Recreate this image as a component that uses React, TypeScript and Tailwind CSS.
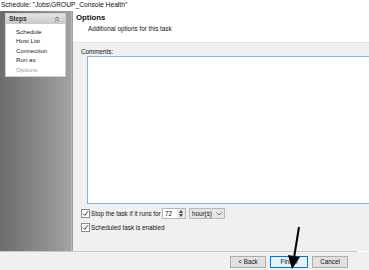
import React from "react";

const font = { fontFamily: '"Liberation Sans", Arial, sans-serif' };

const Check: React.FC = () => (
  <span className="w-[9px] h-[9px] border border-[#8a8a8a] bg-white flex items-center justify-center shrink-0">
    <svg width="7" height="7" viewBox="0 0 7 7">
      <path d="M1 3.6 L2.8 5.4 L6 1.2" fill="none" stroke="#3a3a3a" strokeWidth="1" />
    </svg>
  </span>
);

const Button: React.FC<{ label: string; focused?: boolean }> = ({ label, focused }) => (
  <button
    className={
      focused
        ? "w-[38px] h-[12px] bg-[#e5f1fb] border border-[#0078d7] text-[6.3px] leading-[10px] text-[#111]"
        : "w-[36px] h-[12px] bg-[#e1e1e1] border border-[#adadad] text-[6.3px] leading-[10px] text-[#111]"
    }
  >
    {label}
  </button>
);

const steps = ["Schedule", "Host List", "Connection", "Run as", "Options"];

export default function App() {
  return (
    <div className="w-[369px] h-[270px] bg-white flex flex-col relative overflow-hidden text-[#111]" style={font}>
      <div className="h-[11px] pl-[1px] text-[6.7px] leading-[10px] whitespace-nowrap">
        Schedule: "Jobs\GROUP_Console Health"
      </div>

      <div className="h-[240px] flex">
        <aside className="w-[71px] bg-gradient-to-r from-[#6c6c6c] to-[#a2a2a2] pt-[2px] px-[5px]">
          <div className="bg-white border border-[#d0d0d0]">
            <div className="h-[10px] bg-gradient-to-b from-[#e4e4e4] to-[#c8c8c8] flex items-center justify-between pl-[3px] pr-[5px]">
              <span className="text-[6.5px] font-bold text-[#333]">Steps</span>
              <svg width="6" height="6" viewBox="0 0 6 6">
                <path d="M1 3 L3 1 L5 3 M1 5.5 L3 3.5 L5 5.5" fill="none" stroke="#555" strokeWidth="0.8" />
              </svg>
            </div>
            <ul className="pt-[3px] pb-[2px] pl-[10px]">
              {steps.map((s, i) => (
                <li
                  key={s}
                  className={
                    i === 4
                      ? "text-[6.2px] leading-[9.4px] text-[#9a9a9a]"
                      : "text-[6.2px] leading-[9.4px] text-[#1a1a1a]"
                  }
                >
                  {s}
                </li>
              ))}
            </ul>
          </div>
        </aside>
        <div className="w-[2px] bg-[#b8b8b8] border-r border-[#a0a0a0]" />

        <main className="flex-1 flex flex-col">
          <header className="h-[32px] bg-white pl-[3px] pt-[1px] border-b border-[#e2e2e2]">
            <h1 className="text-[7.8px] font-bold leading-[12px] text-[#111]">Options</h1>
            <p className="pl-[12px] text-[6.3px] leading-[10px]">Additional options for this task</p>
          </header>
          <section className="flex-1 bg-[#f0f0f0] pl-[8px] pt-[4px]">
            <div className="text-[6.3px] leading-[9px]">Comments:</div>
            <div className="ml-[6px] h-[148px] bg-white border border-[#7eb4ea] border-r-0" />
            <div className="mt-[4px] flex items-center gap-[1px] h-[11px]">
              <Check />
              <span className="text-[6.3px] w-[70px] whitespace-nowrap">Stop the task if it runs for</span>
              <div className="flex h-[11px] border border-[#b8b8b8] bg-white">
                <span className="w-[14px] text-[6.3px] leading-[9px] pl-[2px]">72</span>
                <span className="w-[8px] bg-[#e8e8e8] flex flex-col items-center justify-center gap-[1px]">
                  <svg width="4" height="3" viewBox="0 0 4 3"><path d="M0 3 L2 0 L4 3Z" fill="#444" /></svg>
                  <svg width="4" height="3" viewBox="0 0 4 3"><path d="M0 0 L2 3 L4 0Z" fill="#444" /></svg>
                </span>
              </div>
              <div className="ml-[2px] w-[36px] h-[11px] bg-[#e5e5e5] border border-[#b8b8b8] flex items-center justify-between px-[2px]">
                <span className="text-[6.3px] leading-[9px]">hour(s)</span>
                <svg width="6" height="4" viewBox="0 0 6 4"><path d="M0.5 0.5 L3 3 L5.5 0.5" fill="none" stroke="#555" strokeWidth="0.8" /></svg>
              </div>
            </div>
            <div className="mt-[3px] flex items-center gap-[1px] h-[11px]">
              <Check />
              <span className="text-[6.3px]">Scheduled task is enabled</span>
            </div>
          </section>
        </main>
      </div>

      <div className="h-[1px] w-[357px] bg-[#c8c8c8]" />
      <footer className="flex-1 bg-[#f0f0f0] flex items-start justify-end gap-[4px] pr-[21px] pt-[4px]">
        <Button label="< Back" />
        <Button label="Finish" focused />
        <Button label="Cancel" />
      </footer>

      <svg className="absolute left-[284px] top-[226px]" width="20" height="44" viewBox="0 0 20 44">
        <path d="M15 1 L10 32" stroke="#000" strokeWidth="2" />
        <path d="M4 29 L16 31 L8 43 Z" fill="#000" />
      </svg>
    </div>
  );
}
